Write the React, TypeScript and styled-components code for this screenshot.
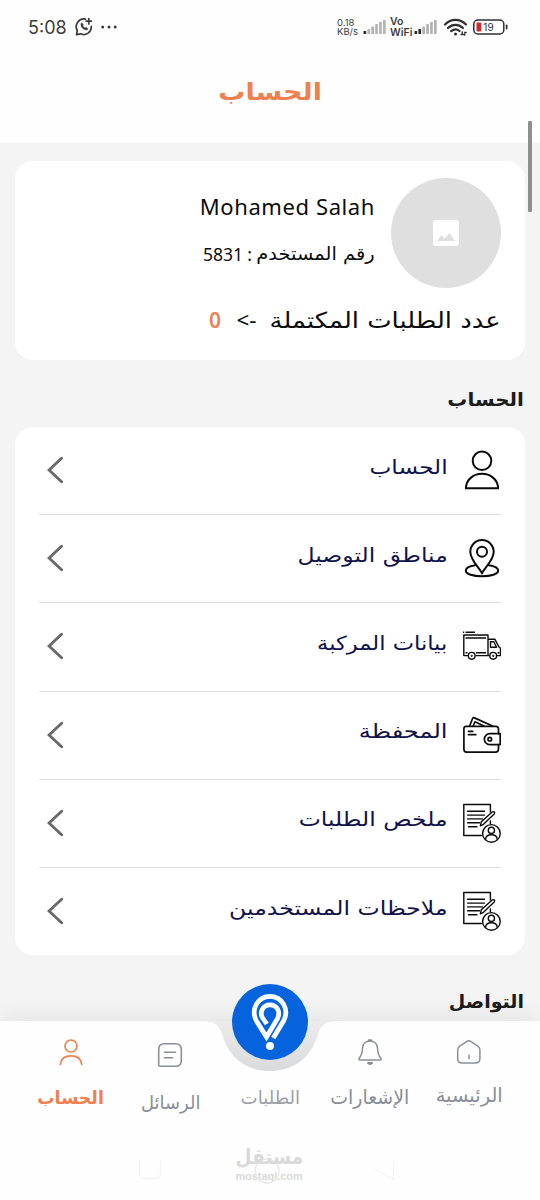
import React from "react";
import styled, { createGlobalStyle } from "styled-components";

const GlobalStyle = createGlobalStyle`
  * { box-sizing: border-box; }
  body { margin: 0; background: #f4f4f4; font-family: "DejaVu Sans", sans-serif; }
`;

const ORANGE = "#ee8150";
const NAVY = "#12124a";
const GREY = "#8a8e98";

const Screen = styled.div`
  position: relative;
  display: flex;
  flex-direction: column;
  width: 540px;
  height: 1200px;
  overflow: hidden;
  direction: rtl;
  background: #f4f4f4;
`;

const Header = styled.header`
  flex: none;
  height: 143px;
  background: #fefefe;
`;

const StatusBar = styled.div`
  display: flex;
  justify-content: space-between;
  direction: ltr;
  height: 54px;
  padding: 0 32px 0 28px;
  font-family: Inter, sans-serif;
  color: #3c3c3c;
`;

const StatusGroup = styled.div`
  display: flex;
  align-items: center;
`;

const Clock = styled.span`
  width: 47px;
  font-size: 18px;
`;

const StackedLabel = styled.div<{ $size: number; $width: number; $bold?: boolean }>`
  width: ${(p) => p.$width}px;
  font-size: ${(p) => p.$size}px;
  font-weight: ${(p) => (p.$bold ? 600 : 400)};
  line-height: ${(p) => (p.$bold ? 11 : 9.5)}px;
  white-space: pre-line;
`;

const Line = styled.div<{ $size: number; $stretch?: number; $color?: string; $bold?: boolean }>`
  flex: none;
  width: max-content;
  line-height: 30px;
  font-size: ${(p) => p.$size}px;
  font-weight: ${(p) => (p.$bold ? 700 : 400)};
  color: ${(p) => p.$color ?? "#0c0c0c"};
  white-space: nowrap;
  transform: scaleX(${(p) => p.$stretch ?? 1});
  transform-origin: right center;
`;

const TitleRow = styled.div`
  display: flex;
  justify-content: center;
  padding-top: 23px;

  & > * { transform-origin: center; }
`;

const Content = styled.main`
  flex: 1;
  min-height: 0;
  padding: 18px 15px 0;
  overflow: hidden;
`;

const Card = styled.section`
  padding: 0 24px;
  border-radius: 18px;
  background: #fff;
`;

const ProfileCard = styled(Card)`
  height: 199px;
  padding-top: 17px;
`;

const ProfileTop = styled.div`
  display: flex;
  gap: 16px;
`;

const Avatar = styled.div`
  display: grid;
  place-items: center;
  width: 110px;
  height: 110px;
  border-radius: 50%;
  background: #dfdfdf;
`;

const ProfileText = styled.div`
  display: flex;
  flex-direction: column;
  gap: 18px;
  padding-top: 13px;
`;

const Name = styled.div`
  font-family: "Noto Sans", sans-serif;
  font-size: 22px;
  line-height: 30px;
  letter-spacing: 0.6px;
  direction: ltr;
  color: #0c0c0c;
  white-space: nowrap;
`;

const UserIdRow = styled.div`
  display: flex;
  width: 172px;
  justify-content: space-between;
  line-height: 30px;
`;

const UserIdLabel = styled.div`
  width: 119px;
`;

const LatinText = styled.span<{ $size: number; $bold?: boolean; $color?: string }>`
  font-family: "Noto Sans", sans-serif;
  font-size: ${(p) => p.$size}px;
  font-weight: ${(p) => (p.$bold ? 600 : 400)};
  line-height: 30px;
  color: ${(p) => p.$color ?? "#0c0c0c"};
`;

const OrdersRow = styled.div`
  display: flex;
  justify-content: space-between;
  width: 292px;
  margin-top: 17px;
`;

const OrdersLabel = styled.div`
  width: 229px;
  padding-top: 1px;
`;

const SectionTitle = styled.div<{ $top: number; $bottom?: number }>`
  margin: ${(p) => p.$top}px 0 ${(p) => p.$bottom ?? 0}px;
  padding-right: 1px;
`;

const MenuRow = styled.div`
  display: flex;
  align-items: center;
  height: 88.2px;
  padding: 0 0 1px 8px;
  border-bottom: 1px solid #dedede;

  &:last-child { height: 87px; padding-bottom: 0; border-bottom: 0; }

  & > svg { flex: none; }
`;

const MenuLabel = styled.div`
  flex: 1;
  padding: 0 15.5px 5px 0;
`;

const ScrollThumb = styled.div`
  position: absolute;
  top: 121px;
  right: 8px;
  width: 4px;
  height: 91px;
  border-radius: 1px;
  background: #8f8f8f;
`;

const BottomNav = styled.nav`
  position: relative;
  flex: none;
  display: flex;
  height: 179px;
  padding: 0 21px;
  background: #fefefe;
  box-shadow: 0 -4px 24px rgba(0, 0, 0, 0.07);
`;

const Notch = styled.svg`
  position: absolute;
  top: 0;
  left: 0;
`;

const NavItem = styled.div<{ $pad: number; $gap: number }>`
  position: relative;
  display: flex;
  flex: 1;
  flex-direction: column;
  align-items: center;
  gap: ${(p) => p.$gap}px;
  margin-top: ${(p) => p.$pad}px;

  & > ${Line} { transform-origin: center; }
`;

const OrdersButton = styled.div`
  flex: none;
  width: 76px;
  height: 76px;
  border-radius: 50%;
  background: #0564dd;
`;

const Watermark = styled.div`
  position: absolute;
  top: 120px;
  left: 129px;
  display: flex;
  flex-direction: column;
  align-items: center;
  width: 280px;
  height: 60px;
  color: #d9d9d9;
`;

const WatermarkShapes = styled.svg`
  position: absolute;
  inset: 0;
`;

const WatermarkName = styled.div`
  font-size: 21px;
  font-weight: 700;
  line-height: 26px;
  margin-top: 3px;
  transform: scaleX(0.88);
`;

const WatermarkUrl = styled.div`
  font-family: "Liberation Sans", sans-serif;
  font-size: 10.9px;
  font-weight: 700;
  line-height: 12px;
  margin-top: -0.5px;
  direction: ltr;
`;

const stroke = { fill: "none", stroke: "#0b0b0b", strokeLinecap: "round", strokeLinejoin: "round" } as const;

const UserIcon = () => (
  <svg width="38" height="40" viewBox="0 0 38 40" {...stroke} strokeWidth="2">
    <circle cx="19" cy="10.8" r="9.3" />
    <path d="M3 38.3V36.5C4 29 11 23.8 19 23.8S34 29 35 36.5V38.3Z" strokeLinejoin="miter" />
  </svg>
);

const PinIcon = () => (
  <svg width="38" height="40" viewBox="0 0 38 40" {...stroke} strokeWidth="2">
    <path d="M19 35.5C17.5 31 7.3 22.5 7.3 13.7a11.7 11.7 0 0 1 23.4 0C30.7 22.5 20.5 31 19 35.5Z" />
    <circle cx="19" cy="13.7" r="5" />
    <path d="M12.2 27.2C6.5 28 2.8 30 2.8 32.7 2.8 36 10 38.2 19 38.2s16.2-2.2 16.2-5.500c0-2.700-3.700-4.700-9.400-5.500" />
  </svg>
);

const TruckIcon = () => (
  <svg width="38" height="40" viewBox="0 0 38 40" {...stroke} strokeWidth="1.4" strokeLinecap="butt">
    <path d="M0 6.300h1.200M2.500 6.300H12" />
    <path d="M5 29.600H.8V9H25v20.600H12.500M25 13.200h6.800l4 7.600 1.700 1.500v7.300h-3.700M26.500 29.600H25M2.500 12H23M2.500 26.800H4.500M13 26.800H23M36.500 26.800H34.500" />
    <path d="M27.500 15.700h3.300l2.700 5.600h-6z" />
    <circle cx="8.700" cy="29.800" r="3.400" />
    <circle cx="30.200" cy="29.800" r="3.400" />
    <circle cx="8.700" cy="29.800" r=".4" />
    <circle cx="30.200" cy="29.800" r=".4" />
  </svg>
);

const WalletIcon = () => (
  <svg width="38" height="40" viewBox="0 0 38 40" {...stroke} strokeWidth="1.700">
    <path d="M35.500 18.700V14c0-1.800-1-2.700-2.600-2.700H3.200C1.500 11.300.9 12.300.9 14v20c0 2 .8 3.200 2.700 3.200h28.800c2 0 3.100-1.200 3.100-3.200v-4.400" />
    <path d="M37.200 18.700H26.800a5.450 5.450 0 0 0 0 10.900h10.400Z" />
    <circle cx="26.800" cy="24.200" r="1.800" />
    <path d="M6.500 11.200 9.600 3.500C10 2.600 10.700 2.600 11.500 2.900L29.500 11M10.200 11l1.700-4.200L21 11M5.500 16.300h4.300M5.500 19.700h7.300" />
  </svg>
);

const NoteIcon = () => (
  <svg width="38" height="40" viewBox="0 0 38 40" {...stroke} strokeWidth="1.400">
    <path d="M18.500 32.500H.8V1.500H27.400V9M27.400 18v3" strokeLinejoin="miter" />
    <path d="M4.500 8.300H21.500M4.500 12.100H21.500M4.500 15.900H19.500M4.500 19.700H16.500M5.500 23.700H14" />
    <path d="M17.300 22.800 18.300 18.800 29.200 8.900C31 8 32.300 9.600 31.200 11L20.500 21.300Z" fill="#fff" />
    <circle cx="28.400" cy="30.400" r="8.800" fill="#fff" />
    <circle cx="28.400" cy="27.400" r="3.100" />
    <path d="M22.500 36.600C22.800 33 25 31.800 28.400 31.800S34 33 34.300 36.600" />
  </svg>
);

const Chevron = () => (
  <svg width="17" height="28" viewBox="0 0 17 28" fill="none" stroke="#686868" strokeWidth="2.900" strokeLinecap="round">
    <path d="M14.600 2.200 2 14 14.600 25.800" />
  </svg>
);

const Signal = ({ active }: { active: number }) => (
  <svg width="24" height="16" viewBox="0 0 24 16">
    {[3, 5, 7.5, 10, 12, 14].map((h, i) => (
      <rect key={i} x={0.5 + i * 3.9} y={15 - h} width="2.700" height={h} rx="0.500" fill={i < active ? "#2c2c2c" : "#b3b3b3"} />
    ))}
  </svg>
);

const menu: { label: string; stretch: number; icon: React.ReactNode }[] = [
  { label: "الحساب", stretch: 1.19, icon: <UserIcon /> },
  { label: "مناطق التوصيل", stretch: 1.205, icon: <PinIcon /> },
  { label: "بيانات المركبة", stretch: 1.16, icon: <TruckIcon /> },
  { label: "المحفظة", stretch: 1.24, icon: <WalletIcon /> },
  { label: "ملخص الطلبات", stretch: 1.205, icon: <NoteIcon /> },
  { label: "ملاحظات المستخدمين", stretch: 1.21, icon: <NoteIcon /> },
];

export default function App() {
  return (
    <Screen>
      <GlobalStyle />
      <Header>
        <StatusBar>
          <StatusGroup>
            <Clock>5:08</Clock>
            <svg width="44" height="20" viewBox="0 0 44 20" fill="none" stroke="#3c3c3c" strokeWidth="1.700" strokeLinecap="round" strokeLinejoin="round">
              <path d="M10.500 2.200A7.600 7.600 0 0 0 2.300 13.500L1.500 17.700 5.600 16.800A7.600 7.600 0 0 0 16.300 9.300" />
              <path d="M11.200 4.200h5.200M13.800 1.500v5.400" />
              <path d="M6 6.500C5.500 10 8 12.800 12.200 13.100L12.800 11.400 10.800 10.300 9.800 11.100 7.800 9 8.300 7.900 7.300 6.200Z" fill="#3c3c3c" strokeWidth=".5" />
              <g fill="#3c3c3c" stroke="none">
                <circle cx="27.700" cy="10" r="1.500" />
                <circle cx="34" cy="10" r="1.500" />
                <circle cx="40.200" cy="10" r="1.500" />
              </g>
            </svg>
          </StatusGroup>
          <StatusGroup>
            <StackedLabel $size={9.5} $width={26}>{"0.18\nKB/s"}</StackedLabel>
            <Signal active={1} />
            <StackedLabel $size={10.5} $width={24} $bold style={{ marginLeft: 3 }}>{"Vo\nWiFi"}</StackedLabel>
            <Signal active={2} />
            <svg width="31" height="22" viewBox="0 0 29 22" fill="none" stroke="#303030" strokeWidth="2.200" strokeLinecap="round">
              <path d="M6 8.500C12 2.200 21 2.200 27 8.500M9 12C13.500 7.800 19.500 7.800 24 12M12.200 15.200C15 12.800 18 12.800 20.500 15" />
              <circle cx="16.500" cy="18" r="1.500" fill="#303030" stroke="none" />
              <path d="M22 18.500h2.500M23.200 15.800v2.700M25.800 19.300v-3h1.500" strokeWidth="1.300" />
            </svg>
            <svg width="36" height="18" viewBox="0 0 36 18" style={{ marginLeft: 3 }}>
              <rect x="1.800" y="2" width="30" height="14" rx="4" fill="none" stroke="#303030" strokeWidth="1.500" />
              <rect x="4.500" y="4.500" width="4.800" height="9" rx="1" fill="#cf2a30" />
              <rect x="33.800" y="6.500" width="1.700" height="5" rx=".8" fill="#303030" />
              <text x="16.500" y="12.600" textAnchor="middle" fontFamily="Inter, sans-serif" fontSize="10" fill="#303030">19</text>
            </svg>
          </StatusGroup>
        </StatusBar>
        <TitleRow>
          <Line $size={23.5} $stretch={1.15} $color={ORANGE} $bold>الحساب</Line>
        </TitleRow>
      </Header>

      <Content>
        <ProfileCard>
          <ProfileTop>
            <Avatar>
              <svg width="26" height="26" viewBox="0 0 26 26">
                <rect width="26" height="26" rx="3" fill="#fff" />
                <path d="M4 21 8.500 15 11.500 18.500 16.500 13 22 21Z" fill="#dfdfdf" />
              </svg>
            </Avatar>
            <ProfileText>
              <Name>Mohamed Salah</Name>
              <UserIdRow>
                <UserIdLabel>
                  <Line $size={18} $stretch={1.08}>رقم المستخدم</Line>
                </UserIdLabel>
                <LatinText $size={17.5}>:</LatinText>
                <LatinText $size={17.5}>5831</LatinText>
              </UserIdRow>
            </ProfileText>
          </ProfileTop>
          <OrdersRow>
            <OrdersLabel>
              <Line $size={22} $stretch={1.175}>عدد الطلبات المكتملة</Line>
            </OrdersLabel>
            <LatinText $size={22.5}>-&gt;</LatinText>
            <LatinText $size={21} $bold $color={ORANGE}>0</LatinText>
          </OrdersRow>
        </ProfileCard>

        <SectionTitle $top={23.5} $bottom={13.5}>
          <Line $size={19} $stretch={1.05} $color="#1c1c1c" $bold>الحساب</Line>
        </SectionTitle>

        <Card>
          {menu.map((item) => (
            <MenuRow key={item.label}>
              {item.icon}
              <MenuLabel>
                <Line $size={19.5} $stretch={item.stretch} $color={NAVY}>{item.label}</Line>
              </MenuLabel>
              <Chevron />
            </MenuRow>
          ))}
        </Card>

        <SectionTitle $top={31.5}>
          <Line $size={19} $color="#1c1c1c" $bold>التواصل</Line>
        </SectionTitle>
      </Content>

      <BottomNav>
        <Notch width="540" height="60" viewBox="0 0 540 60">
          <defs>
            <linearGradient id="notch" x1="0" y1="0" x2="0" y2="1">
              <stop offset="0" stopColor="#ececec" />
              <stop offset="1" stopColor="#d9dadc" />
            </linearGradient>
          </defs>
          <path d="M200 0C213 0 219 3 222 13C228 36 246 50 270 50S312 36 318 13C321 3 327 0 340 0Z" fill="url(#notch)" />
        </Notch>
        <NavItem $pad={17} $gap={14.5}>
          <svg width="28" height="28" viewBox="0 0 28 28" fill="none" stroke={GREY} strokeWidth="1.500" strokeLinecap="round" strokeLinejoin="round">
            <path d="M11.500 3.600 4.700 8.200C3.300 9.200 2.700 10.300 2.700 12v8.500c0 3 1.500 4.600 4.500 4.600h13.200c3 0 4.500-1.600 4.500-4.600V12c0-1.700-.6-2.800-2-3.800L16.100 3.600C14.300 2.400 13.300 2.400 11.500 3.600ZM14 17.200v3.500" />
          </svg>
          <Line $size={19.5} $color={GREY}>الرئيسية</Line>
        </NavItem>
        <NavItem $pad={17} $gap={16.5}>
          <svg width="28" height="28" viewBox="0 0 28 28" fill="none" stroke={GREY} strokeWidth="1.500" strokeLinecap="round" strokeLinejoin="round">
            <path d="M14 3C9.500 3 6.700 6 6.500 10.300 6.300 15.500 5.500 17.500 3.200 20.200 2.500 21 2.800 21.900 3.800 21.900H24.200C25.200 21.900 25.500 21 24.800 20.200 22.500 17.500 21.700 15.500 21.500 10.300 21.300 6 18.500 3 14 3Z" />
            <path d="M12.800 2.200h2.400M12 25h4l-2 1z" strokeWidth="2" />
          </svg>
          <Line $size={19.5} $stretch={0.97} $color={GREY}>الإشعارات</Line>
        </NavItem>
        <NavItem $pad={-37} $gap={22.5}>
          <OrdersButton>
            <svg width="76" height="76" viewBox="0 0 76 76" fill="none" stroke="#fff" strokeWidth="4.700">
              <path d="M41.300 54 51.800 36.500C57.500 25 50 12.300 38 12.300S18.500 25 24.200 36.500L34.500 53 45 35.500C49.500 27.500 44.500 20.800 38 20.800 31 20.800 26.800 28.500 31 34.500L34.800 40" />
              <circle cx="38" cy="62" r="4" fill="#fff" stroke="none" />
            </svg>
          </OrdersButton>
          <Line $size={18.5} $stretch={0.98} $color="#9ea1a8">الطلبات</Line>
        </NavItem>
        <NavItem $pad={20} $gap={18.5}>
          <svg width="28" height="28" viewBox="0 0 28 28" fill="none" stroke={GREY} strokeWidth="1.600" strokeLinecap="round" strokeLinejoin="round">
            <path d="M8 2.700H19.500C23 2.700 25.300 5 25.300 8.500V19.500C25.300 23 23 25.300 19.500 25.300H4.200C3.200 25.300 2.700 24.800 2.700 23.800V8.500C2.700 5 4.800 2.700 8 2.700ZM8.500 11.300H19.500M8.500 16.800H16.500" />
          </svg>
          <Line $size={18.5} $stretch={0.97} $color={GREY}>الرسائل</Line>
        </NavItem>
        <NavItem $pad={17} $gap={16.5}>
          <svg width="28" height="28" viewBox="0 0 28 28" fill="none" stroke={ORANGE} strokeWidth="1.700" strokeLinecap="round">
            <circle cx="14" cy="8" r="6" />
            <path d="M3.300 26.500C3.800 21 7.500 17.800 14 17.800S24.200 21 24.700 26.500" />
          </svg>
          <Line $size={18.5} $stretch={0.94} $color={ORANGE} $bold>الحساب</Line>
        </NavItem>
        <Watermark>
          <WatermarkShapes width="280" height="60" viewBox="0 0 280 60" fill="none" stroke="#e8e8e8" strokeWidth="1.300">
            <path d="M10.500 19.500V33C10.500 36 12 37.500 15 37.500H27C30 37.500 31.500 36 31.500 33V19.500M264.500 19.500V38.500L246 28.500" stroke="#f4f4f4" />
            <circle cx="138" cy="30" r="12" />
          </WatermarkShapes>
          <WatermarkName>مستقل</WatermarkName>
          <WatermarkUrl>mostaql.com</WatermarkUrl>
        </Watermark>
      </BottomNav>
      <ScrollThumb />
    </Screen>
  );
}
